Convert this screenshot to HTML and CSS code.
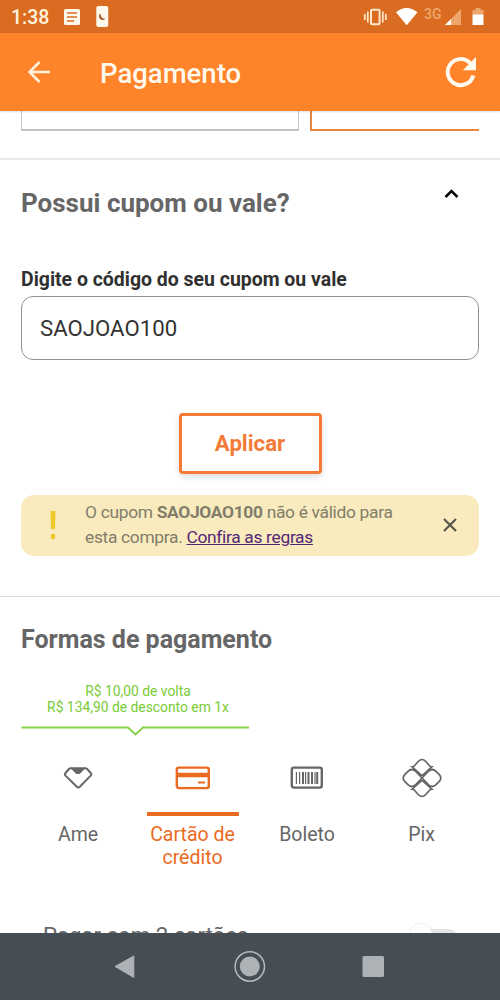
FILE: index.html
```html
<!DOCTYPE html>
<html lang="pt-BR">
<head>
<meta charset="utf-8">
<title>Pagamento</title>
<link rel="stylesheet" href="styles.css">
</head>
<body>
<div class="status">
  <span class="clock">1:38</span>
  <svg class="status-icons" width="48" height="33" viewBox="62 0 48 33"><rect x="64" y="9" width="16" height="16" rx="1.5" fill="#fff8ec"/><path d="M67 13h10M67 17h10M67 21h7" stroke="#d96c21" stroke-width="1.4"/><rect x="96.300" y="6" width="12" height="21" rx="2" fill="#fff8ec"/><path d="M100.500 13.500a3.600 3.600 0 1 0 4.800 5.300q-4.500 0-4.800-5.300z" fill="#a85a28"/></svg>
  <span class="space"></span>
  <svg width="58" height="33" viewBox="362 0 58 33"><rect x="371" y="9.700" width="8.600" height="14.600" rx="1" fill="none" stroke="#ffe8cc" stroke-width="2"/><path d="M367.800 11.500v11M382.800 11.500v11M364.800 14v6M385.800 14v6" stroke="#ffe8cc" stroke-width="1.700"/><path d="M396 12.200Q406.500 3.600 417.500 12.200L406.700 25.200z" fill="#fff"/></svg>
  <span class="net">3G</span>
  <svg width="44" height="33" viewBox="444 0 44 33"><path d="M461 9v16h-16z" fill="#efa66c"/><path d="M451 19v6h-6z" fill="#fff"/><path d="M472.500 10h3V8h5v2h3v5h-11z" fill="#efa66c"/><path d="M472.500 14.500h11V25h-11z" fill="#fff"/></svg>
</div>
<header class="appbar">
  <svg width="24" height="24" viewBox="0 0 24 24" fill="none" stroke="#fff3df" stroke-width="2.500"><path d="M12.500 2L2.500 12l10 10M3 12h20"/></svg>
  <h1 class="title">Pagamento</h1>
  <svg width="32" height="32" viewBox="0 0 32 32"><path d="M28.300 19.400A13 13 0 1 1 25.200 7.200" fill="none" stroke="#fffaf0" stroke-width="4"/><path d="M31 1v13.200H17.800z" fill="#fffaf0"/></svg>
</header>
<main class="content">
  <div class="cards"><div class="card"></div><div class="card card-on"></div></div>
  <section class="coupon">
    <div class="coupon-head"><h2 class="heading">Possui cupom ou vale?</h2><svg width="15" height="10" viewBox="0 0 15 10"><path d="M1.500 8L7.500 2l6 6" fill="none" stroke="#080808" stroke-width="2.500"/></svg></div>
    <label class="label" for="code">Digite o código do seu cupom ou vale</label>
    <input class="field" id="code" value="SAOJOAO100">
    <button class="apply">Aplicar</button>
    <div class="notice">
      <svg width="6" height="29" viewBox="0 0 6 29"><path d="M.5 0h5L5 18H1zM1 23h4v5H1z" fill="#efc929"/></svg>
      <p class="message">O cupom <b>SAOJOAO100</b> não é válido para<br>esta compra. <a class="rules" href="#">Confira as regras</a></p>
      <svg width="14" height="14" viewBox="0 0 14 14"><path d="M1 1l12 12M13 1L1 13" stroke="#58564b" stroke-width="2.200"/></svg>
    </div>
  </section>
  <section class="payment">
    <h2 class="heading heading-pay">Formas de pagamento</h2>
    <div class="promo"><span class="promo-a">R$ 10,00 de volta</span><span class="promo-b">R$ 134,90 de desconto em 1x</span>
      <svg class="promo-line" width="229" height="10" viewBox="0 0 229 10"><path d="M0.500 1.500H107l7.500 7 7.500-7H228" fill="none" stroke="#85d344" stroke-width="1.800"/></svg></div>
    <div class="methods">
      <div class="method"><div class="pic"><svg width="30" height="24" viewBox="0 0 30 24"><path d="M7.500 2.300h15q1 0 1.700.7l3.500 4q1.200 1.300 0 2.600L16.800 20.800q-1.500 1.400-3 0L2.500 9.600Q1.300 8.300 2.500 7l3.500-4q.6-.7 1.500-.7z" fill="none" stroke="#666" stroke-width="2"/><path d="M8 2.500h14l-4.500 4.700q-2.500 1.800-5 0z" fill="#666"/></svg></div><span>Ame</span></div>
      <div class="method method-on"><div class="pic"><svg width="36" height="24" viewBox="0 0 36 24"><rect x="1.800" y="1.600" width="32" height="20.500" rx="2" fill="none" stroke="#eb6a22" stroke-width="2.400"/><path d="M1.500 9H34" stroke="#eb6a22" stroke-width="4.500"/><path d="M23 16.500h7" stroke="#eb6a22" stroke-width="2"/></svg></div><span>Cartão de<br>crédito</span></div>
      <div class="method"><div class="pic"><svg width="34" height="24" viewBox="0 0 34 24"><rect x="1.800" y="1.600" width="30" height="20" rx="2" fill="none" stroke="#666" stroke-width="2.400"/><path d="M6.400 6v12M9.600 6v12M15.600 6v12M25 6v12" stroke="#666" stroke-width="1.200"/><path d="M13 6v12M18.500 6v12M22 6v12M27.200 6v12" stroke="#666" stroke-width="2"/></svg></div><span>Boleto</span></div>
      <div class="method"><div class="pic"><svg width="40" height="40" viewBox="-20 -20 40 40" fill="none" stroke="#666" stroke-width="1.700"><path d="M-9.800-11.200Q-8.500-11.200-7.500-12.300L-3.800-16.500Q0-20.500 3.800-16.500L7.500-12.300Q8.500-11.200 9.800-11.200L1-3.200Q0-2.400-1-3.200zM-9.800 11.200Q-8.500 11.200-7.500 12.300L-3.800 16.500Q0 20.500 3.800 16.500L7.500 12.300Q8.500 11.200 9.800 11.200L1 3.200Q0 2.400-1 3.200zM0 0L-6.300-6.700Q-10.500-10.300-14-6.700L-17.300-3.400Q-20.300 0-17.300 3.400L-14 6.700Q-10.500 10.300-6.300 6.700zM0 0L6.300-6.700Q10.500-10.300 14-6.700L17.300-3.400Q20.300 0 17.300 3.400L14 6.700Q10.500 10.300 6.300 6.700z"/></svg></div><span>Pix</span></div>
    </div>
    <div class="split"><span class="split-text">Pagar com 2 cartões</span><span class="switch"><span class="knob"></span></span></div>
  </section>
</main>
<nav class="nav">
  <svg width="500" height="67" viewBox="0 0 500 67"><path d="M115 33.500L133.800 23v21.500z" fill="#adb2b6" stroke="#adb2b6" stroke-linejoin="round"/><circle cx="249.800" cy="33.500" r="14.700" fill="none" stroke="#b5babd" stroke-width="1.500"/><circle cx="249.800" cy="33.500" r="10" fill="#adb2b6"/><rect x="362.500" y="23" width="21.500" height="21" rx="1.500" fill="#adb2b6"/></svg>
</nav>
</body>
</html>
```
FILE: styles.css
```css
* { box-sizing: border-box; }
body { margin: 0; width: 500px; height: 1000px; overflow: hidden; display: flex; flex-direction: column; background: #fff; font-family: Roboto, "Liberation Sans", sans-serif; color: #666; }
h1, h2, p { margin: 0; }
svg { display: block; flex: none; }
.status { height: 33px; flex: none; background: #d96c21; display: flex; align-items: center; padding: 0 12px 0 11px; color: #fff3df; }
.clock { width: 51px; font-size: 19.500px; line-height: 33px; font-weight: 500; padding-top: 2px; }
.space { flex: 1; }
.net { width: 24px; padding: 0 0 5px 4px; color: #efa66c; font-size: 14px; line-height: 20px; font-weight: 500; }
.appbar { height: 78px; flex: none; background: #ff8429; display: flex; align-items: center; padding: 0 23px 0 27px; z-index: 1; box-shadow: 0 1px 2px #0002; }
.title { flex: 1; padding-left: 49px; color: #fff8ec; font-size: 27.500px; line-height: 32px; font-weight: 500; white-space: nowrap; padding-top: 3px; }
.content { flex: 1; min-height: 0; overflow: hidden; }
.cards { display: grid; grid-template-columns: 278px 1fr; gap: 11px; padding: 0 21px 27px; border-bottom: 2px solid #e8e8e8; }
.card { height: 20px; border: 1.500px solid #c4c4c4; border-bottom-width: 2px; border-top: 0; }
.card-on { border-color: #e8853f; border-right: 0; border-left-width: 2px; }
.coupon { display: flex; flex-direction: column; padding: 28px 21px 40px; border-bottom: 1px solid #ddd; height: 437px; }
.coupon-head { display: flex; justify-content: space-between; padding-right: 20px; }
.coupon-head svg { margin-top: 1px; }
.heading { font-size: 26px; line-height: 30px; font-weight: 700; white-space: nowrap; }
.heading-pay { font-size: 25px; }
.label { margin-top: 50px; font-size: 19.450px; line-height: 24px; font-weight: 700; color: #303030; white-space: nowrap; }
.field { display: block; width: 458px; height: 64px; flex: none; margin-top: 4px; border: 1.500px solid #929292; border-radius: 12px; padding: 0 18px; background: #fff; color: #333; font: 22.200px/30px Roboto, sans-serif; }
.apply { align-self: center; width: 143px; height: 61px; flex: none; margin: 53px 0 0; padding-bottom: 3px; border: 3px solid #f47a36; border-radius: 4px; background: #fff; color: #f47a36; font: 700 22.200px/28px Roboto, sans-serif; box-shadow: 0 3px 6px #0002; }
.notice { display: flex; align-items: center; height: 61px; flex: none; margin-top: 21px; border-radius: 13px; background: #faebbf; padding: 0 22px 0 29px; color: #817d69; }
.message { flex: 1; padding: 0 0 1px 29px; font-size: 17.400px; letter-spacing: -.32px; line-height: 25px; white-space: nowrap; }
.notice > svg:last-child { margin-bottom: 2px; }
.rules { color: #542774; }
.payment { padding: 28px 21px 0; }
.promo { width: 229px; display: flex; flex-direction: column; align-items: center; margin-top: 28px; color: #7acb37; font-size: 13.850px; line-height: 16px; white-space: nowrap; }
.promo-a, .promo-b { margin-left: 5px; }
.promo-line { margin-top: 11px; }
.methods { display: grid; grid-template-columns: repeat(4, 92px); gap: 22.500px; margin-left: 11px; margin-top: 15px; }
.method { text-align: center; font-size: 19.500px; line-height: 23px; white-space: nowrap; }
.pic { height: 65px; margin-bottom: 7px; display: grid; place-items: start center; grid-template-rows: 54px; border-bottom: 4px solid transparent; }
.pic svg { align-self: center; }
.method-on { color: #eb6a22; }
.method-on .pic { border-color: #eb6a22; }
.split { display: flex; justify-content: space-between; padding: 52px 22px 0; font-size: 22.200px; line-height: 28px; }
.split-text { white-space: nowrap; }
.switch { width: 41px; height: 16px; margin-top: 8px; border-radius: 8px; background: #e5e5e5; }
.knob { display: block; width: 22px; height: 22px; margin: -5px 0 0 -6px; border-radius: 50%; background: #fff; box-shadow: 0 0 3px #0002; }
.nav { height: 67px; flex: none; background: #464e53; }
```
